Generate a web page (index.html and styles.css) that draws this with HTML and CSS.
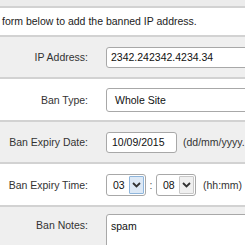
FILE: index.html
```html
<!DOCTYPE html>
<html lang="en">
<head>
  <meta charset="UTF-8" />
  <title>Ban IP Address</title>
  <link rel="stylesheet" href="styles.css">
</head>
<body>
  <div class="top-bar"></div>
  <div class="intro">form below to add the banned IP address.</div>

  <form class="ban-form">
    <div class="row alt">
      <label class="lbl">IP Address:</label>
      <div class="field"><div class="box text-box wide">2342.242342.4234.34</div></div>
    </div>

    <div class="row">
      <label class="lbl">Ban Type:</label>
      <div class="field"><div class="box select-box wide">Whole Site</div></div>
    </div>

    <div class="row alt">
      <label class="lbl">Ban Expiry Date:</label>
      <div class="field">
        <div class="box text-box date">10/09/2015</div>
        <span class="hint">(dd/mm/yyyy.</span>
      </div>
    </div>

    <div class="row">
      <label class="lbl">Ban Expiry Time:</label>
      <div class="field">
        <div class="box time">
          <span class="val">03</span>
          <span class="arrow focus"><svg width="9" height="6" viewBox="0 0 9 6"><path d="M1 1 L4.5 4.5 L8 1" fill="none" stroke="#333" stroke-width="1.8"/></svg></span>
        </div>
        <span class="colon">:</span>
        <div class="box time">
          <span class="val">08</span>
          <span class="arrow"><svg width="9" height="6" viewBox="0 0 9 6"><path d="M1 1 L4.5 4.5 L8 1" fill="none" stroke="#333" stroke-width="1.8"/></svg></span>
        </div>
        <span class="hint">(hh:mm)</span>
      </div>
    </div>

    <div class="row alt notes">
      <label class="lbl">Ban Notes:</label>
      <div class="field"><div class="box text-box wide area">spam</div></div>
    </div>
  </form>
</body>
</html>
```

FILE: styles.css
```css
body {
  margin: 0;
  width: 245px;
  height: 245px;
  overflow: hidden;
  font-family: "Liberation Sans", Arial, sans-serif;
  font-size: 10.5px;
  color: #333;
  background: #fff;
}

.top-bar {
  height: 6px;
  background: #ececec;
  border-bottom: 2px solid #d2d2d2;
}

.intro {
  height: 27px;
  line-height: 27px;
  padding-left: 2px;
  white-space: nowrap;
  color: #222;
  border-bottom: 2px solid #d2d2d2;
}

.row {
  display: grid;
  grid-template-columns: 88px 1fr;
  column-gap: 18px;
  align-items: center;
  height: 41px;
  border-bottom: 2px solid #d2d2d2;
}

.row.alt {
  height: 40px;
  background: #efefef;
}

.row.notes {
  align-items: start;
  padding-top: 7px;
  border-bottom: none;
}

.lbl {
  text-align: right;
  white-space: nowrap;
  color: #333;
}

.notes .lbl {
  padding-top: 5px;
}

.field {
  display: flex;
  align-items: center;
  min-width: 0;
  overflow: hidden;
  white-space: nowrap;
}

.box {
  box-sizing: border-box;
  flex-shrink: 0;
  background: #fff;
  border: 1px solid #a8a8a8;
  border-radius: 3px;
  color: #111;
  font-size: 10.5px;
}

.text-box {
  height: 21px;
  line-height: 19px;
  padding-left: 4px;
}

.wide {
  width: 160px;
}

.select-box {
  height: 24px;
  line-height: 22px;
  padding-left: 8px;
}

.date {
  width: 71px;
  padding-left: 5px;
}

.area {
  height: 40px;
  padding-top: 2px;
}

.hint {
  margin-left: 6px;
  color: #333;
}

.time {
  display: flex;
  align-items: stretch;
  width: 40px;
  height: 22px;
}

.time .val {
  flex: 1;
  line-height: 20px;
  padding-left: 6px;
}

.time .arrow {
  display: flex;
  align-items: center;
  justify-content: center;
  width: 13px;
  margin: 1px;
  background: #f0f0f0;
  border: 1px solid #c8c8c8;
  border-radius: 1px;
}

.time .arrow.focus {
  background: #dde9f6;
  border-color: #8fb6dc;
}

.colon {
  width: 10px;
  text-align: center;
  color: #555;
}

.time + .colon + .time + .hint {
  margin-left: 7px;
}
```
